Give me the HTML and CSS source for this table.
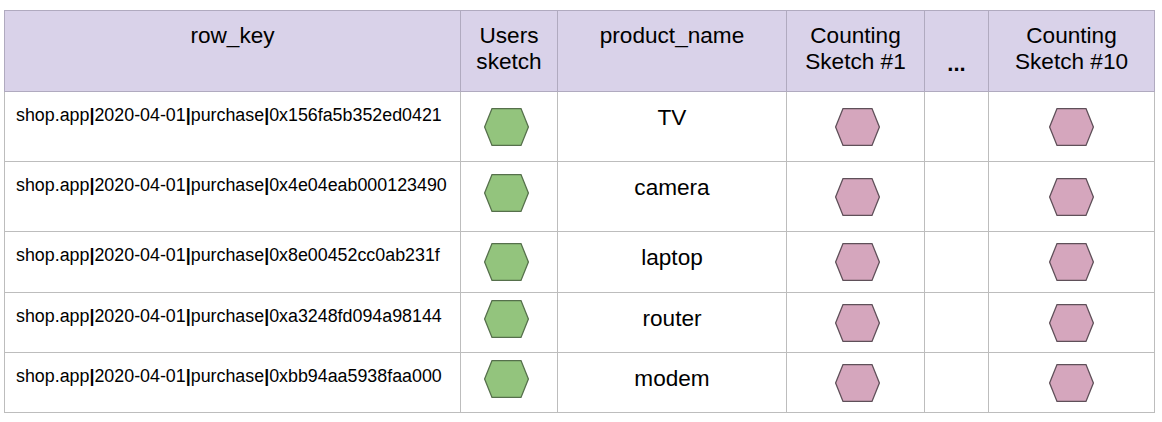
FILE: index.html
```html
<!DOCTYPE html>
<html>
<head>
<meta charset="utf-8">
<link rel="stylesheet" href="styles.css">
</head>
<body>
<svg width="0" height="0" class="defs">
  <defs>
    <polygon id="hex" points="8,0.6 37,0.6 44.4,19 37,37.4 8,37.4 0.6,19"/>
  </defs>
</svg>
<div class="wrap">
<table class="grid">
  <colgroup>
    <col class="c-key"><col class="c-users"><col class="c-prod"><col class="c-cs1"><col class="c-dots"><col class="c-cs10">
  </colgroup>
  <thead>
    <tr class="head">
      <th>row_key</th>
      <th>Users<br>sketch</th>
      <th>product_name</th>
      <th>Counting<br>Sketch #1</th>
      <th><br><b class="dots">...</b></th>
      <th>Counting<br>Sketch #10</th>
    </tr>
  </thead>
  <tbody>
    <tr class="r1">
      <td class="key">shop.app<b>|</b>2020-04-01<b>|</b>purchase<b>|</b>0x156fa5b352ed0421</td>
      <td class="sk sk-g"><svg class="hx green" viewBox="0 0 45 38"><use href="#hex"/></svg></td>
      <td class="prod">TV</td>
      <td class="sk sk-p1"><svg class="hx pink" viewBox="0 0 45 38"><use href="#hex"/></svg></td>
      <td></td>
      <td class="sk"><svg class="hx pink" viewBox="0 0 45 38"><use href="#hex"/></svg></td>
    </tr>
    <tr class="r2">
      <td class="key">shop.app<b>|</b>2020-04-01<b>|</b>purchase<b>|</b>0x4e04eab000123490</td>
      <td class="sk sk-g"><svg class="hx green up" viewBox="0 0 45 38"><use href="#hex"/></svg></td>
      <td class="prod">camera</td>
      <td class="sk sk-p1"><svg class="hx pink" viewBox="0 0 45 38"><use href="#hex"/></svg></td>
      <td></td>
      <td class="sk"><svg class="hx pink" viewBox="0 0 45 38"><use href="#hex"/></svg></td>
    </tr>
    <tr class="r3">
      <td class="key">shop.app<b>|</b>2020-04-01<b>|</b>purchase<b>|</b>0x8e00452cc0ab231f</td>
      <td class="sk sk-g"><svg class="hx green" viewBox="0 0 45 38"><use href="#hex"/></svg></td>
      <td class="prod">laptop</td>
      <td class="sk sk-p1"><svg class="hx pink" viewBox="0 0 45 38"><use href="#hex"/></svg></td>
      <td></td>
      <td class="sk"><svg class="hx pink" viewBox="0 0 45 38"><use href="#hex"/></svg></td>
    </tr>
    <tr class="r4">
      <td class="key">shop.app<b>|</b>2020-04-01<b>|</b>purchase<b>|</b>0xa3248fd094a98144</td>
      <td class="sk sk-g"><svg class="hx green up" viewBox="0 0 45 38"><use href="#hex"/></svg></td>
      <td class="prod">router</td>
      <td class="sk sk-p1"><svg class="hx pink" viewBox="0 0 45 38"><use href="#hex"/></svg></td>
      <td></td>
      <td class="sk"><svg class="hx pink" viewBox="0 0 45 38"><use href="#hex"/></svg></td>
    </tr>
    <tr class="r5">
      <td class="key">shop.app<b>|</b>2020-04-01<b>|</b>purchase<b>|</b>0xbb94aa5938faa000</td>
      <td class="sk sk-g"><svg class="hx green up" viewBox="0 0 45 38"><use href="#hex"/></svg></td>
      <td class="prod">modem</td>
      <td class="sk sk-p1"><svg class="hx pink" viewBox="0 0 45 38"><use href="#hex"/></svg></td>
      <td></td>
      <td class="sk"><svg class="hx pink" viewBox="0 0 45 38"><use href="#hex"/></svg></td>
    </tr>
  </tbody>
</table>
</div>
</body>
</html>
```

FILE: styles.css
```css
html, body {
  margin: 0;
  padding: 0;
  background: #ffffff;
}
body {
  font-family: "Liberation Sans", Arial, sans-serif;
  color: #000000;
}
.defs {
  position: absolute;
  width: 0;
  height: 0;
}
.wrap {
  padding: 10px 0 0 4px;
}
.grid {
  border-collapse: collapse;
  table-layout: fixed;
  width: 1151px;
}
.c-key { width: 456px; }
.c-users { width: 97px; }
.c-prod { width: 229px; }
.c-cs1 { width: 138px; }
.c-dots { width: 64px; }
.c-cs10 { width: 166px; }

.grid th, .grid td {
  border: 1px solid #bdbdbd;
  padding: 0;
  vertical-align: top;
  text-align: center;
}
.grid th {
  background: #d9d2e9;
  font-weight: normal;
  font-size: 22.6px;
  line-height: 26px;
  padding-top: 12px;
  border-color: #b0aabf;
}
.head { height: 81px; }
.dots {
  font-weight: bold;
  font-size: 22px;
  position: relative;
  top: 2px;
}
.r1, .r2 { height: 70px; }
.r3 { height: 61px; }
.r4, .r5 { height: 60px; }

.grid td.key {
  text-align: left;
  font-size: 17.85px;
  line-height: 22px;
  padding: 12px 0 0 11px;
  white-space: nowrap;
}
.grid td.key b {
  font-weight: bold;
}
.grid td.prod {
  font-size: 22.6px;
  line-height: 26px;
  padding-top: 13px;
}
.grid td.sk {
  vertical-align: middle;
}
.grid td.sk-g {
  padding-right: 6px;
}
.grid td.sk-p1 {
  padding-left: 3px;
}
.hx {
  display: block;
  width: 45px;
  height: 38px;
  margin: 0 auto;
  overflow: visible;
}
.hx.up {
  position: relative;
  top: -4px;
}
.green use {
  fill: #93c47d;
  stroke: #56704c;
  stroke-width: 1.3;
}
.pink use {
  fill: #d5a6bd;
  stroke: #5f5059;
  stroke-width: 1.3;
}
```
